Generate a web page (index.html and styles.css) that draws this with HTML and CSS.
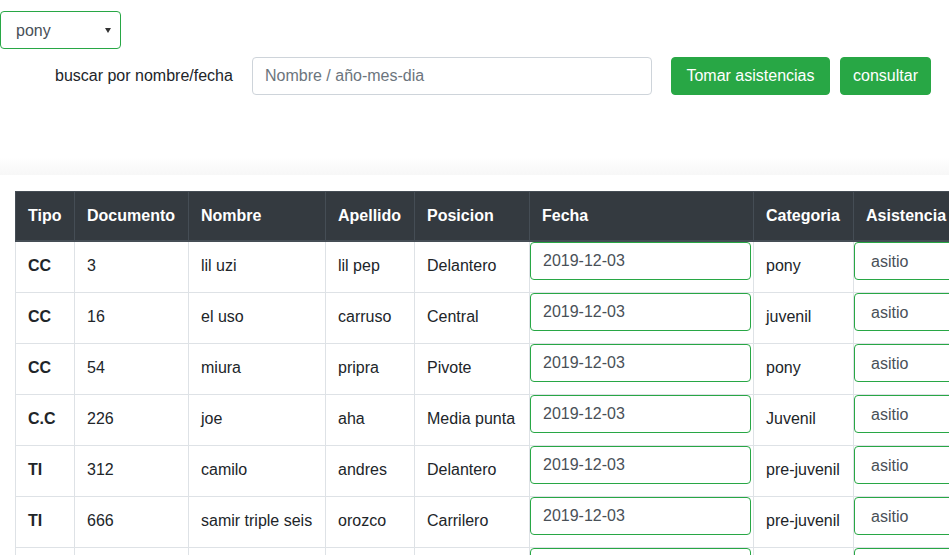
FILE: index.html
```html
<!DOCTYPE html>
<html lang="es">
<head>
<meta charset="utf-8">
<title>Asistencias</title>
<link rel="stylesheet" href="styles.css">
</head>
<body>
<div class="page">
  <div class="select-wrap top-select">
    <select class="form-select">
      <option>pony</option>
      <option>juvenil</option>
      <option>pre-juvenil</option>
    </select>
  </div>
  <div class="search-row">
    <label class="search-label" for="q">buscar por nombre/fecha</label>
    <input id="q" class="form-input search-input" type="text" placeholder="Nombre / año-mes-dia">
    <button class="btn btn-tomar">Tomar asistencias</button>
    <button class="btn btn-consultar">consultar</button>
  </div>
  <div class="band"></div>
  <table class="tbl">
    <colgroup>
      <col class="c-tipo"><col class="c-doc"><col class="c-nom"><col class="c-ape"><col class="c-pos"><col class="c-fec"><col class="c-cat"><col class="c-asi">
    </colgroup>
    <thead>
      <tr><th>Tipo</th><th>Documento</th><th>Nombre</th><th>Apellido</th><th>Posicion</th><th>Fecha</th><th>Categoria</th><th>Asistencia</th></tr>
    </thead>
    <tbody>
      <tr><td class="b">CC</td><td>3</td><td>lil uzi</td><td>lil pep</td><td>Delantero</td><td class="inp"><input class="form-input cell-input" value="2019-12-03"></td><td>pony</td><td class="inp"><select class="form-select cell-select"><option>asitio</option><option>no asistio</option></select></td></tr>
      <tr><td class="b">CC</td><td>16</td><td>el uso</td><td>carruso</td><td>Central</td><td class="inp"><input class="form-input cell-input" value="2019-12-03"></td><td>juvenil</td><td class="inp"><select class="form-select cell-select"><option>asitio</option><option>no asistio</option></select></td></tr>
      <tr><td class="b">CC</td><td>54</td><td>miura</td><td>pripra</td><td>Pivote</td><td class="inp"><input class="form-input cell-input" value="2019-12-03"></td><td>pony</td><td class="inp"><select class="form-select cell-select"><option>asitio</option><option>no asistio</option></select></td></tr>
      <tr><td class="b">C.C</td><td>226</td><td>joe</td><td>aha</td><td>Media punta</td><td class="inp"><input class="form-input cell-input" value="2019-12-03"></td><td>Juvenil</td><td class="inp"><select class="form-select cell-select"><option>asitio</option><option>no asistio</option></select></td></tr>
      <tr><td class="b">TI</td><td>312</td><td>camilo</td><td>andres</td><td>Delantero</td><td class="inp"><input class="form-input cell-input" value="2019-12-03"></td><td>pre-juvenil</td><td class="inp"><select class="form-select cell-select"><option>asitio</option><option>no asistio</option></select></td></tr>
      <tr><td class="b">TI</td><td>666</td><td>samir triple seis</td><td>orozco</td><td>Carrilero</td><td class="inp"><input class="form-input cell-input" value="2019-12-03"></td><td>pre-juvenil</td><td class="inp"><select class="form-select cell-select"><option>asitio</option><option>no asistio</option></select></td></tr>
      <tr><td></td><td></td><td></td><td></td><td></td><td class="inp"><input class="form-input cell-input" value=""></td><td></td><td class="inp"><select class="form-select cell-select"><option></option></select></td></tr>
    </tbody>
  </table>
</div>
</body>
</html>
```

FILE: styles.css
```css
html, body {
  margin: 0;
  padding: 0;
  overflow: hidden;
  background: #fff;
}
body {
  font-family: "Liberation Sans", Arial, sans-serif;
  font-size: 16px;
  line-height: 24px;
  color: #212529;
}
.page {
  padding-top: 11px;
  width: 1200px;
}
.select-wrap {
  position: relative;
  display: inline-block;
}
.top-select::after {
  content: "";
  position: absolute;
  right: 10px;
  top: 17px;
  border-left: 3.5px solid transparent;
  border-right: 3.5px solid transparent;
  border-top: 5px solid #333;
  pointer-events: none;
}
.form-select {
  -webkit-appearance: none;
  appearance: none;
  font-family: inherit;
  font-size: 16px;
  color: #495057;
  background: #fff;
  border: 1px solid #28a745;
  border-radius: 4px;
  height: 38px;
  padding: 0 12px 0 15px;
  margin: 0;
  display: block;
}
.top-select .form-select {
  width: 121px;
}
.search-row {
  display: flex;
  align-items: center;
  padding-left: 55px;
  margin-top: 8px;
  height: 38px;
}
.search-label {
  width: 197px;
  flex: none;
  color: #212529;
}
.form-input {
  font-family: inherit;
  font-size: 16px;
  color: #495057;
  background: #fff;
  border: 1px solid #ced4da;
  border-radius: 4px;
  height: 38px;
  box-sizing: border-box;
  padding: 6px 12px;
  margin: 0;
  display: block;
}
.form-input::placeholder {
  color: #6c757d;
  opacity: 1;
}
.search-input {
  width: 400px;
  margin-right: 19px;
}
.btn {
  font-family: inherit;
  font-size: 16px;
  color: #fff;
  background: #28a745;
  border: 1px solid #28a745;
  border-radius: 4px;
  height: 38px;
  padding: 0;
  margin: 0 10px 0 0;
  text-align: center;
  cursor: pointer;
}
.btn-tomar {
  width: 159px;
}
.btn-consultar {
  width: 91px;
}
.band {
  margin-top: 62px;
  height: 18px;
  background: linear-gradient(to bottom, #ffffff, #f7f7f7);
}
.tbl {
  margin: 16px 0 0 15px;
  border-collapse: collapse;
  table-layout: fixed;
  width: 1000px;
}
.c-tipo { width: 59px; }
.c-doc { width: 114px; }
.c-nom { width: 137px; }
.c-ape { width: 89px; }
.c-pos { width: 115px; }
.c-fec { width: 224px; }
.c-cat { width: 100px; }
.c-asi { width: 162px; }
.tbl th {
  background: #343a40;
  color: #fff;
  font-weight: bold;
  text-align: left;
  padding: 12px;
  border: 1px solid #454d55;
  border-bottom: 2px solid #454d55;
  white-space: nowrap;
  overflow: hidden;
}
.tbl td {
  padding: 12px 12px 14px;
  border: 1px solid #dee2e6;
  vertical-align: top;
  white-space: nowrap;
  overflow: hidden;
}
.tbl td.b {
  font-weight: bold;
}
.tbl td.inp {
  padding: 0;
  height: 50px;
}
.cell-input {
  border-color: #28a745;
  width: 221px;
  color: #495057;
}
.cell-select {
  width: 160px;
  padding-left: 16px;
}
```
